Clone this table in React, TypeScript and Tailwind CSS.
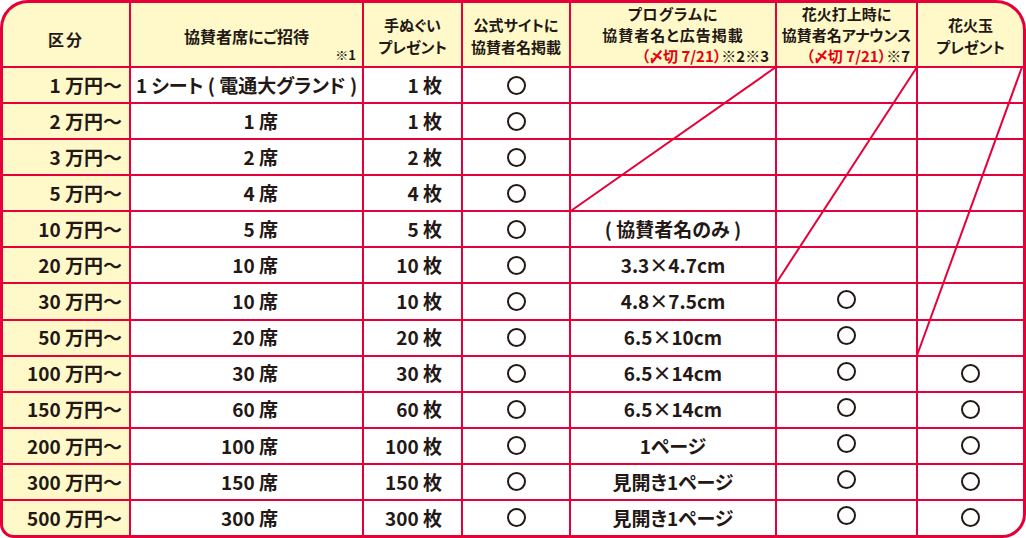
import { FC, ReactNode } from "react";

type Row = {
  price: string;
  seats: string;
  towel: string;
  program?: string;
  announce?: boolean;
  hanabi?: boolean;
};

const rows: Row[] = [
  { price: "1", seats: "", towel: "1" },
  { price: "2", seats: "1", towel: "1" },
  { price: "3", seats: "2", towel: "2" },
  { price: "5", seats: "4", towel: "4" },
  { price: "10", seats: "5", towel: "5", program: "( 協賛者名のみ )" },
  { price: "20", seats: "10", towel: "10", program: "3.3×4.7cm" },
  { price: "30", seats: "10", towel: "10", program: "4.8×7.5cm", announce: true },
  { price: "50", seats: "20", towel: "20", program: "6.5×10cm", announce: true },
  { price: "100", seats: "30", towel: "30", program: "6.5×14cm", announce: true, hanabi: true },
  { price: "150", seats: "60", towel: "60", program: "6.5×14cm", announce: true, hanabi: true },
  { price: "200", seats: "100", towel: "100", program: "1ページ", announce: true, hanabi: true },
  { price: "300", seats: "150", towel: "150", program: "見開き1ページ", announce: true, hanabi: true },
  { price: "500", seats: "300", towel: "300", program: "見開き1ページ", announce: true, hanabi: true }
];

const Circle: FC<{ className?: string }> = ({ className = "" }) => (
  <span
    className={`block w-[19px] h-[19px] rounded-full border-[2.5px] border-[#231815] ${className}`}
  />
);

const Head: FC<{ children: ReactNode; className?: string }> = ({ children, className = "" }) => (
  <div
    className={`bg-[#fff9c9] flex flex-col justify-center text-[15px] leading-[21px] [font-feature-settings:'palt'] ${className}`}
  >
    {children}
  </div>
);

const Deadline: FC<{ note: string }> = ({ note }) => (
  <div className="text-right pr-[6px]">
    <span className="text-[#e60012]">（〆切 7/21）</span>
    {note}
  </div>
);

export default function App() {
  return (
    <div className="w-[1026px] h-[538px] bg-white font-['Noto_Sans_CJK_JP',sans-serif] font-bold text-[#231815]">
      <div className="relative w-full h-full border-[3px] border-[#e5003a] bg-[#e5003a] rounded-tl-[28px] rounded-tr-[30px] rounded-br-[24px] rounded-bl-[14px] overflow-hidden">
        <div className="grid h-full grid-cols-[126px_231px_97px_106px_204px_139px_105px] grid-rows-[63px_repeat(13,minmax(0,1fr))] gap-[2px]">
          <Head className="items-center pt-[10px] text-[16px] tracking-[2px]">区分</Head>
          <Head className="relative items-center pt-[4px] text-[16px]">
            協賛者席にご招待
            <span className="absolute right-[6px] bottom-[5px] text-[13px] leading-none">※1</span>
          </Head>
          <Head className="items-center text-center pt-[3px] leading-[22px]">
            <div>手ぬぐい</div>
            <div>プレゼント</div>
          </Head>
          <Head className="items-center text-center pt-[3px] leading-[22px]">
            <div>公式サイトに</div>
            <div>協賛者名掲載</div>
          </Head>
          <Head>
            <div className="text-center tracking-[1px]">プログラムに</div>
            <div className="text-center tracking-[1px]">協賛者名と広告掲載</div>
            <Deadline note="※2※3" />
          </Head>
          <Head>
            <div className="text-center">花火打上時に</div>
            <div className="text-center">協賛者名アナウンス</div>
            <Deadline note="※7" />
          </Head>
          <Head className="items-center text-center pt-[3px] leading-[22px]">
            <div>花火玉</div>
            <div>プレゼント</div>
          </Head>

          {rows.map((r, i) => (
            <RowCells key={i} row={r} first={i === 0} />
          ))}
        </div>

        <svg
          className="absolute inset-0 pointer-events-none"
          width="1020"
          height="532"
          viewBox="0 0 1020 532"
        >
          <g stroke="#e5003a" strokeWidth="2" fill="none">
            <line x1="773" y1="64" x2="567" y2="208.5" />
            <line x1="914" y1="64" x2="773" y2="280.5" />
            <line x1="1019" y1="64" x2="914" y2="352.5" />
          </g>
        </svg>
      </div>
    </div>
  );
}

const RowCells: FC<{ row: Row; first: boolean }> = ({ row, first }) => (
  <>
    <div className="bg-[#fff9c9] flex items-center justify-end pr-[7px] text-[19px]">
      {row.price} 万円～
    </div>
    {first ? (
      <div className="bg-white flex items-center justify-center text-[19px] [font-feature-settings:'palt']">
        1 シート ( 電通大グランド )
      </div>
    ) : (
      <div className="bg-white flex items-center justify-end pr-[84px] text-[19px]">
        {row.seats} 席
      </div>
    )}
    <div className="bg-white flex items-center justify-end pr-[19px] text-[19px]">
      {row.towel} 枚
    </div>
    <div className="bg-white flex items-center justify-center">
      <Circle />
    </div>
    <div className="bg-white flex items-center justify-center text-[19px] [font-feature-settings:'palt']">
      {row.program}
    </div>
    <div className="bg-white flex items-center justify-center">
      {row.announce && <Circle className="-translate-y-[2px]" />}
    </div>
    <div className="bg-white flex items-center justify-center">
      {row.hanabi && <Circle />}
    </div>
  </>
);
